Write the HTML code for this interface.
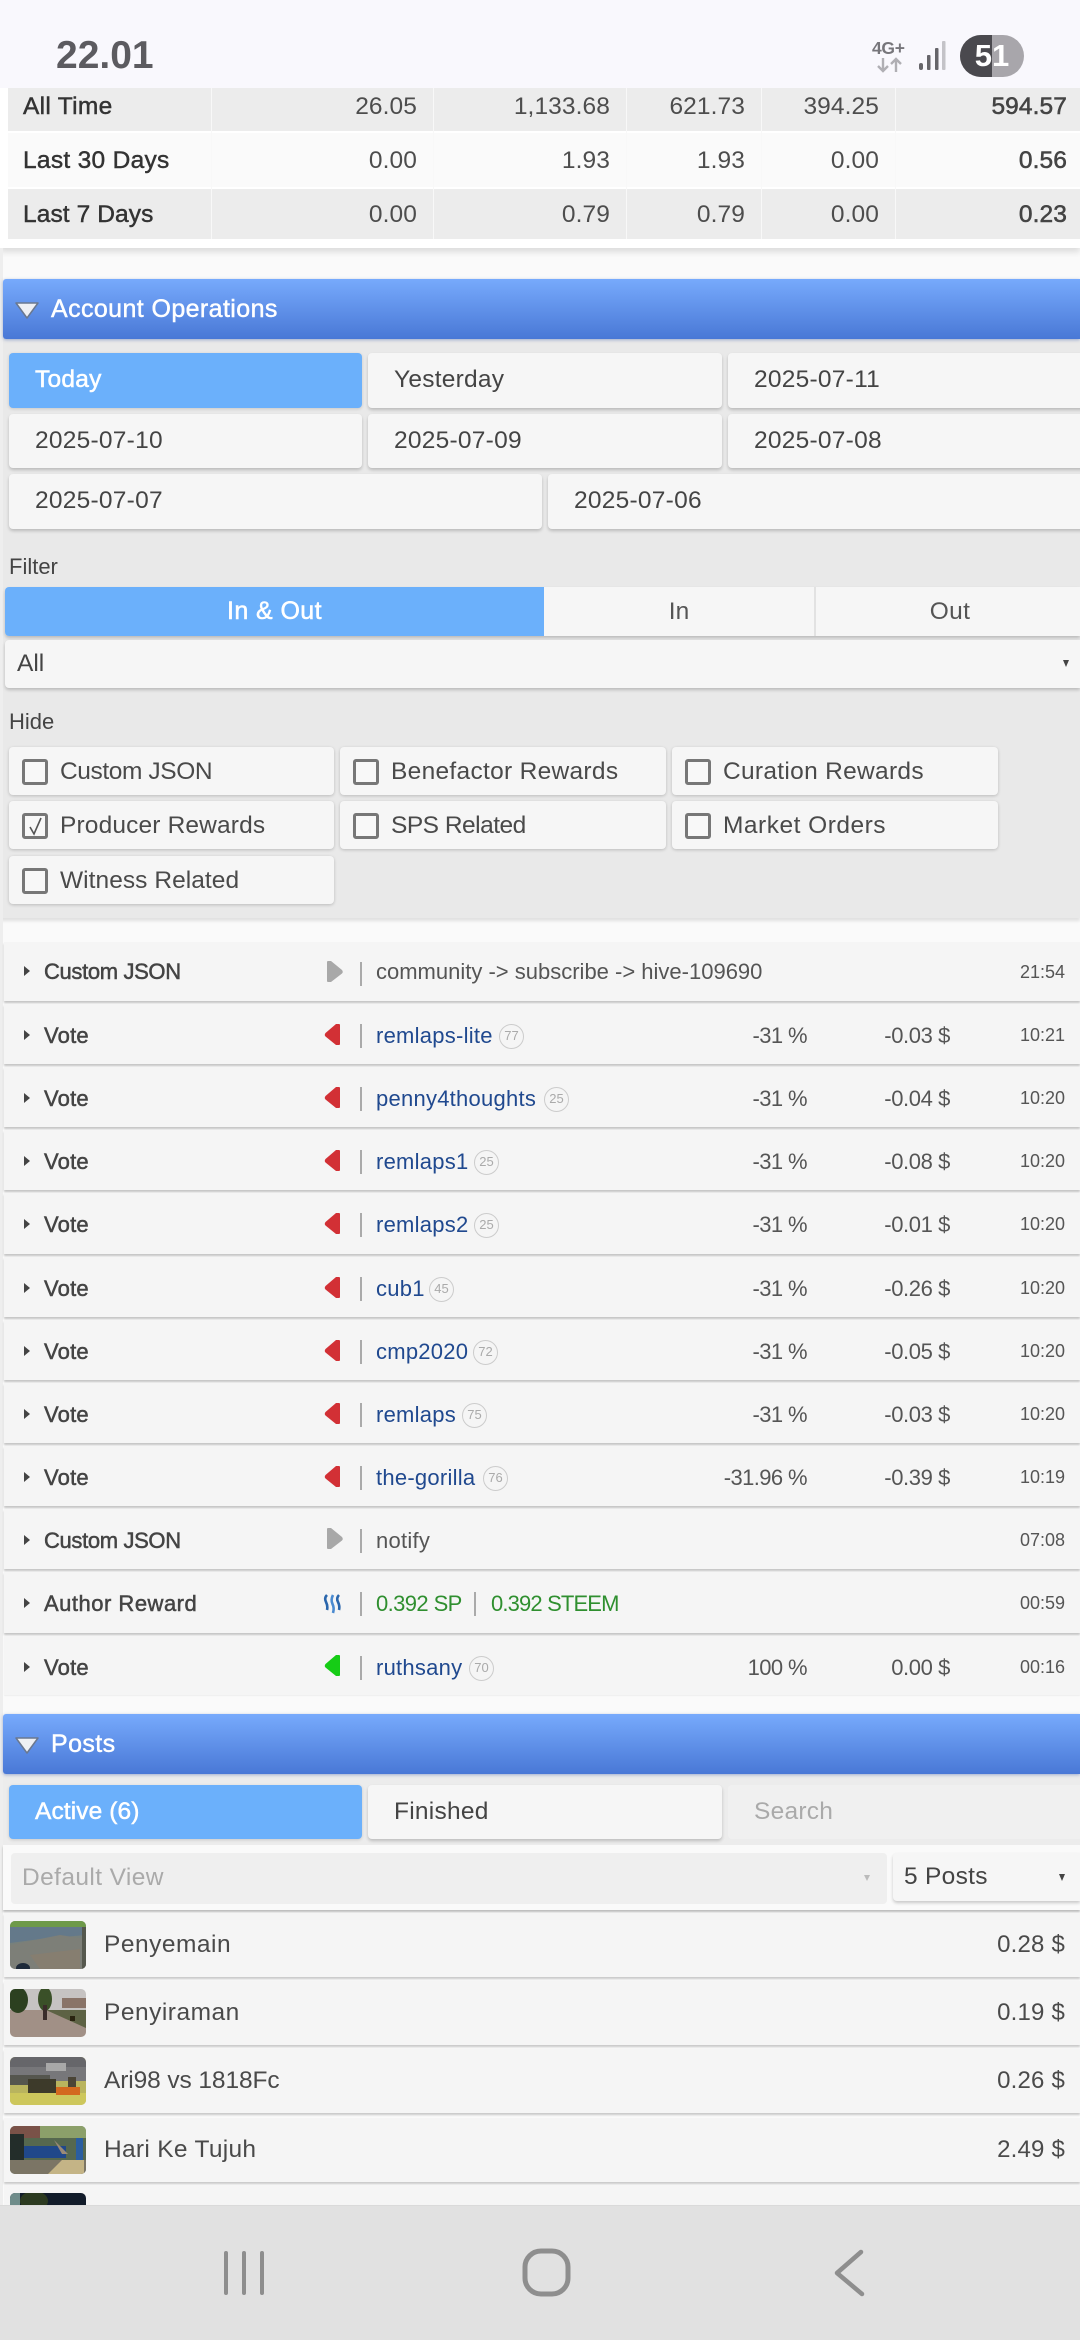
<!DOCTYPE html>
<html><head><meta charset="utf-8">
<style>
html,body{margin:0;padding:0}
body{width:1080px;height:2340px;position:relative;overflow:hidden;background:#fafafa;font-family:"Liberation Sans",sans-serif;color:#444;font-size:24px}
div,svg,span.a{position:absolute}
.t{white-space:nowrap;line-height:30px;height:30px}
.sb{-webkit-text-stroke:.55px currentColor}
.btn{background:#f6f6f6;border-radius:4px;box-shadow:0 2px 3px rgba(0,0,0,.2);line-height:54px;padding-left:26px;box-sizing:border-box;letter-spacing:.25px;color:#444;font-size:24.5px;white-space:nowrap}
.on{background:#6bb0fb;color:#fff;-webkit-text-stroke:.5px #fff;box-shadow:0 1px 3px rgba(0,0,0,.15)}
.hdr{left:3px;width:1077px;height:60px;background:linear-gradient(#77aafc,#4978d6);color:#fff;line-height:60px;font-size:25px;border-radius:3px 0 0 3px;box-shadow:0 1px 3px rgba(80,110,180,.5);-webkit-text-stroke:.45px #fff}
.hdr span{position:absolute;left:48px;letter-spacing:.4px}
.chk{background:#f6f6f6;border-radius:4px;box-shadow:0 1px 3px rgba(0,0,0,.2);height:48px;line-height:50px;padding-left:51px;box-sizing:border-box;font-size:24.5px;letter-spacing:.3px;color:#4a4a4a;white-space:nowrap}
.chk i{position:absolute;left:13px;top:12px;width:20px;height:20px;border:3px solid #777;border-radius:3px;background:#f8f8f8}
.row{left:4px;width:1076px;height:60px;background:#f5f5f5;box-shadow:0 2px 2px rgba(0,0,0,.22)}
.row b{position:absolute;left:40px;top:16.5px;line-height:30px;font-size:22px;font-weight:normal;-webkit-text-stroke:.5px #444;color:#444;white-space:nowrap;letter-spacing:.2px}
.row .ar{left:20px;top:26px;width:0;height:0;border-left:6px solid #444;border-top:5.5px solid transparent;border-bottom:5.5px solid transparent}
.row .sep{left:356px;top:20px;width:2px;height:24px;background:#aaa}
.row .tx{position:absolute;left:372px;top:16.5px;line-height:30px;font-size:22px;white-space:nowrap;letter-spacing:.25px;color:#555}
.row .lk{color:#20498f}
.bd{position:absolute;top:3px;width:23px;height:23px;border:1px solid #ccc;border-radius:50%;font-size:13px;line-height:21px;text-align:center;color:#aaa;font-weight:normal;letter-spacing:0}
.pc{position:absolute;right:273px;top:16.5px;line-height:30px;font-size:22px;color:#555;white-space:nowrap;letter-spacing:-.6px}
.dl{position:absolute;right:130px;top:16.5px;line-height:30px;font-size:22px;color:#555;white-space:nowrap;letter-spacing:-.4px}
.tm{position:absolute;right:15px;top:16px;line-height:30px;font-size:18px;color:#555;white-space:nowrap}
.cell{top:0;font-size:24.5px;line-height:30px;text-align:right;white-space:nowrap;letter-spacing:.1px;color:#4d4d4d}
.post{left:4px;width:1076px;height:64px;background:#f5f5f5;box-shadow:0 2px 2px rgba(0,0,0,.2)}
.post .ti{position:absolute;left:100px;top:17px;line-height:30px;font-size:24.5px;color:#4a4a4a;white-space:nowrap;letter-spacing:.5px}
.post .pr{position:absolute;right:15px;top:17px;line-height:30px;font-size:24px;color:#4a4a4a;white-space:nowrap;letter-spacing:.2px}
.th{left:6px;top:8px;width:76px;height:48px;border-radius:5px;overflow:hidden}
.lab{font-size:24.5px;left:23px;-webkit-text-stroke:.45px #333;color:#333;letter-spacing:.3px}
</style></head><body>

<!-- table top -->
<div style="left:0;top:88px;width:1080px;height:160px;background:#fff;box-shadow:0 4px 6px rgba(0,0,0,.12)"></div>
<div style="left:8px;top:88px;width:1072px;height:43px;background:#ececec"></div>
<div style="left:8px;top:133px;width:1072px;height:54px;background:#fafafa"></div>
<div style="left:8px;top:189px;width:1072px;height:50px;background:#ececec"></div>
<div style="left:211px;top:88px;width:1px;height:151px;background:#f8f8f8"></div>
<div style="left:433px;top:88px;width:1px;height:151px;background:#f8f8f8"></div>
<div style="left:626px;top:88px;width:1px;height:151px;background:#f8f8f8"></div>
<div style="left:761px;top:88px;width:1px;height:151px;background:#f8f8f8"></div>
<div style="left:895px;top:88px;width:1px;height:151px;background:#f8f8f8"></div>

<div style="left:0;top:92px;width:1080px;height:30px">
<div class="t lab">All Time</div>
<div class="cell" style="right:663px">26.05</div><div class="cell" style="right:470px">1,133.68</div><div class="cell" style="right:335px">621.73</div><div class="cell" style="right:201px">394.25</div><div class="cell sb" style="right:13px;color:#444">594.57</div></div>
<div style="left:0;top:146px;width:1080px;height:30px">
<div class="t lab">Last 30 Days</div>
<div class="cell" style="right:663px">0.00</div><div class="cell" style="right:470px">1.93</div><div class="cell" style="right:335px">1.93</div><div class="cell" style="right:201px">0.00</div><div class="cell sb" style="right:13px;color:#444">0.56</div></div>
<div style="left:0;top:200px;width:1080px;height:30px">
<div class="t lab" style="letter-spacing:.1px">Last 7 Days</div>
<div class="cell" style="right:663px">0.00</div><div class="cell" style="right:470px">0.79</div><div class="cell" style="right:335px">0.79</div><div class="cell" style="right:201px">0.00</div><div class="cell sb" style="right:13px;color:#444">0.23</div></div>

<!-- status bar -->
<div style="left:0;top:0;width:1080px;height:88px;background:#f9f8fd"></div>
<div class="t" style="left:56px;top:34px;font-size:39px;line-height:44px;height:44px;font-weight:bold;color:#5c5b60">22.01</div>
<div class="t" style="left:872px;top:36px;font-size:17.500px;line-height:24px;height:24px;font-weight:bold;color:#77767b;letter-spacing:-.3px">4G+</div>
<svg style="left:876px;top:57px" width="28" height="16" viewBox="0 0 28 16" fill="none" stroke="#b0afb4" stroke-width="2.4"><path d="M7 1v13M2 9l5 5 5-5"/><path d="M20 15V2M15 7l5-5 5 5"/></svg>
<svg style="left:918px;top:40px" width="28" height="32" viewBox="0 0 28 32"><rect x="1" y="23" width="4" height="7" rx="2" fill="#66656a"/><rect x="9" y="15" width="3.500" height="15" rx="1" fill="#66656a"/><rect x="17" y="8" width="3.500" height="22" rx="1" fill="#66656a"/><rect x="24" y="1" width="3.500" height="29" rx="1" fill="#c4c3c8"/></svg>
<div style="left:960px;top:35px;width:64px;height:42px;border-radius:21px;overflow:hidden;background:#a8a6ab"><div style="left:0;top:0;width:32px;height:42px;background:#4a494e"></div>
<div class="t" style="left:0;width:64px;top:3px;height:36px;line-height:36px;text-align:center;color:#fff;font-weight:bold;font-size:31px">51</div></div>

<!-- account ops -->
<div style="left:0;top:336px;width:1080px;height:582px;background:#e9e9e9;box-shadow:0 3px 3px rgba(0,0,0,.1)"></div>
<div style="left:0;top:248px;width:3px;height:1960px;background:#eee"></div>
<div class="hdr" style="top:279px"><span>Account Operations</span>
<svg style="left:10px;top:21px" width="28" height="20" viewBox="0 0 28 20"><path d="M3 3h22L14 18z" fill="#eef0f4" stroke="#6a7890" stroke-width="1.5" stroke-linejoin="round"/></svg></div>

<div class="btn on" style="left:9px;top:353px;width:353px;height:55px">Today</div>
<div class="btn" style="left:368px;top:353px;width:354px;height:55px">Yesterday</div>
<div class="btn" style="left:728px;top:353px;width:360px;height:55px">2025-07-11</div>
<div class="btn" style="left:9px;top:414px;width:353px;height:54px">2025-07-10</div>
<div class="btn" style="left:368px;top:414px;width:354px;height:54px">2025-07-09</div>
<div class="btn" style="left:728px;top:414px;width:360px;height:54px">2025-07-08</div>
<div class="btn" style="left:9px;top:474px;width:533px;height:55px">2025-07-07</div>
<div class="btn" style="left:548px;top:474px;width:540px;height:55px">2025-07-06</div>

<div class="t" style="left:9px;top:552px;font-size:22px;color:#444">Filter</div>
<div style="left:5px;top:587px;width:1075px;height:49px;background:#f6f6f6;box-shadow:0 2px 3px rgba(0,0,0,.2);border-radius:4px 0 0 4px"></div>
<div style="left:5px;top:587px;width:539px;height:49px;background:#6bb0fb;border-radius:4px 0 0 4px;color:#fff;-webkit-text-stroke:.5px #fff;text-align:center;line-height:49px;font-size:25px;letter-spacing:.4px">In &amp; Out</div>
<div style="left:814px;top:587px;width:2px;height:49px;background:#e2e2e2"></div>
<div style="left:544px;top:587px;width:270px;height:49px;text-align:center;line-height:49px;font-size:24.5px;color:#555">In</div>
<div style="left:818px;top:587px;width:264px;height:49px;text-align:center;line-height:49px;font-size:24.5px;color:#555;letter-spacing:.3px">Out</div>
<div style="left:5px;top:640px;width:1075px;height:48px;background:#f6f6f6;box-shadow:0 2px 3px rgba(0,0,0,.2);border-radius:4px 0 0 4px;line-height:48px;padding-left:12px;box-sizing:border-box;font-size:24.5px;color:#444">All</div>
<div style="left:1063px;top:660px;width:0;height:0;border-top:7px solid #444;border-left:3px solid transparent;border-right:3px solid transparent"></div>

<div class="t" style="left:9px;top:707px;font-size:22px;color:#444">Hide</div>
<div class="chk" style="left:9px;top:747px;width:325px;letter-spacing:-.4px"><i></i>Custom JSON</div>
<div class="chk" style="left:340px;top:747px;width:326px;letter-spacing:.3px"><i></i>Benefactor Rewards</div>
<div class="chk" style="left:672px;top:747px;width:326px"><i></i>Curation Rewards</div>
<div class="chk" style="left:9px;top:801px;width:325px;letter-spacing:.15px"><i></i>Producer Rewards
<svg style="left:13px;top:12px" width="26" height="26" viewBox="0 0 26 26" fill="none" stroke="#555" stroke-width="1.6"><path d="M8 14l4 7 7-16"/></svg></div>
<div class="chk" style="left:340px;top:801px;width:326px;letter-spacing:-.5px"><i></i>SPS Related</div>
<div class="chk" style="left:672px;top:801px;width:326px;letter-spacing:.5px"><i></i>Market Orders</div>
<div class="chk" style="left:9px;top:856px;width:325px;letter-spacing:.05px"><i></i>Witness Related</div>

<!-- operations -->
<div class="row" style="top:942px;height:59px"><span class="a ar" style="top:24px"></span><b style="top:15px;letter-spacing:-.35px">Custom JSON</b>
<svg style="left:322px;top:19px" width="18" height="22" viewBox="0 0 18 22"><path d="M2 0h3l11 9q1.500 2 0 3.500L5 21H2a1 1 0 0 1-1-1V1a1 1 0 0 1 1-1z" fill="#a8a8a8"/></svg>
<span class="a sep"></span><span class="tx" style="top:15px;letter-spacing:0">community -&gt; subscribe -&gt; hive-109690</span><span class="tm" style="top:14.500px">21:54</span></div>

<div class="row" style="top:1004px"><span class="a ar"></span><b>Vote</b>
<svg style="left:320px;top:20px" width="17" height="22" viewBox="0 0 17 22"><path d="M15 0h-3L1.500 9q-1.500 2 0 3.500L12 21h3a1 1 0 0 0 1-1V1a1 1 0 0 0-1-1z" fill="#d23035"/></svg>
<span class="a sep"></span><span class="tx lk">remlaps-lite<span class="bd" style="left:123px">77</span></span><span class="pc">-31 %</span><span class="dl">-0.03 $</span><span class="tm">10:21</span></div>

<div class="row" style="top:1067px"><span class="a ar"></span><b>Vote</b>
<svg style="left:320px;top:20px" width="17" height="22" viewBox="0 0 17 22"><path d="M15 0h-3L1.500 9q-1.500 2 0 3.500L12 21h3a1 1 0 0 0 1-1V1a1 1 0 0 0-1-1z" fill="#d23035"/></svg>
<span class="a sep"></span><span class="tx lk">penny4thoughts<span class="bd" style="left:168px">25</span></span><span class="pc">-31 %</span><span class="dl">-0.04 $</span><span class="tm">10:20</span></div>

<div class="row" style="top:1130px"><span class="a ar"></span><b>Vote</b>
<svg style="left:320px;top:20px" width="17" height="22" viewBox="0 0 17 22"><path d="M15 0h-3L1.500 9q-1.500 2 0 3.500L12 21h3a1 1 0 0 0 1-1V1a1 1 0 0 0-1-1z" fill="#d23035"/></svg>
<span class="a sep"></span><span class="tx lk">remlaps1<span class="bd" style="left:98px">25</span></span><span class="pc">-31 %</span><span class="dl">-0.08 $</span><span class="tm">10:20</span></div>

<div class="row" style="top:1193px;height:61px"><span class="a ar"></span><b>Vote</b>
<svg style="left:320px;top:20px" width="17" height="22" viewBox="0 0 17 22"><path d="M15 0h-3L1.500 9q-1.500 2 0 3.500L12 21h3a1 1 0 0 0 1-1V1a1 1 0 0 0-1-1z" fill="#d23035"/></svg>
<span class="a sep"></span><span class="tx lk">remlaps2<span class="bd" style="left:98px">25</span></span><span class="pc">-31 %</span><span class="dl">-0.01 $</span><span class="tm">10:20</span></div>

<div class="row" style="top:1257px"><span class="a ar"></span><b>Vote</b>
<svg style="left:320px;top:20px" width="17" height="22" viewBox="0 0 17 22"><path d="M15 0h-3L1.500 9q-1.500 2 0 3.500L12 21h3a1 1 0 0 0 1-1V1a1 1 0 0 0-1-1z" fill="#d23035"/></svg>
<span class="a sep"></span><span class="tx lk">cub1<span class="bd" style="left:53px">45</span></span><span class="pc">-31 %</span><span class="dl">-0.26 $</span><span class="tm">10:20</span></div>

<div class="row" style="top:1320px"><span class="a ar"></span><b>Vote</b>
<svg style="left:320px;top:20px" width="17" height="22" viewBox="0 0 17 22"><path d="M15 0h-3L1.500 9q-1.500 2 0 3.500L12 21h3a1 1 0 0 0 1-1V1a1 1 0 0 0-1-1z" fill="#d23035"/></svg>
<span class="a sep"></span><span class="tx lk">cmp2020<span class="bd" style="left:97px">72</span></span><span class="pc">-31 %</span><span class="dl">-0.05 $</span><span class="tm">10:20</span></div>

<div class="row" style="top:1383px"><span class="a ar"></span><b>Vote</b>
<svg style="left:320px;top:20px" width="17" height="22" viewBox="0 0 17 22"><path d="M15 0h-3L1.500 9q-1.500 2 0 3.500L12 21h3a1 1 0 0 0 1-1V1a1 1 0 0 0-1-1z" fill="#d23035"/></svg>
<span class="a sep"></span><span class="tx lk">remlaps<span class="bd" style="left:86px">75</span></span><span class="pc">-31 %</span><span class="dl">-0.03 $</span><span class="tm">10:20</span></div>

<div class="row" style="top:1446px"><span class="a ar"></span><b>Vote</b>
<svg style="left:320px;top:20px" width="17" height="22" viewBox="0 0 17 22"><path d="M15 0h-3L1.500 9q-1.500 2 0 3.500L12 21h3a1 1 0 0 0 1-1V1a1 1 0 0 0-1-1z" fill="#d23035"/></svg>
<span class="a sep"></span><span class="tx lk">the-gorilla<span class="bd" style="left:107px">76</span></span><span class="pc">-31.96 %</span><span class="dl">-0.39 $</span><span class="tm">10:19</span></div>

<div class="row" style="top:1509px"><span class="a ar"></span><b style="letter-spacing:-.35px">Custom JSON</b>
<svg style="left:322px;top:19px" width="18" height="22" viewBox="0 0 18 22"><path d="M2 0h3l11 9q1.500 2 0 3.500L5 21H2a1 1 0 0 1-1-1V1a1 1 0 0 1 1-1z" fill="#a8a8a8"/></svg>
<span class="a sep"></span><span class="tx">notify</span><span class="tm">07:08</span></div>

<div class="row" style="top:1572px;height:61px"><span class="a ar"></span><b style="letter-spacing:.5px">Author Reward</b>
<svg style="left:319px;top:21px" width="21" height="22" viewBox="0 0 21 22" fill="none" stroke="#2a66ac" stroke-width="2.600"><path d="M4 2Q1 5 3 9T4 17"/><path d="M10 2q-2.500 5-.5 9t.5 9" stroke="#4a8ad0"/><path d="M16 2q-3 3-1 7t1 8"/></svg>
<span class="a sep"></span><span class="tx" style="color:#2f8f2f;font-size:22px;letter-spacing:-.6px">0.392 SP</span><span class="a" style="left:470px;top:20px;width:2px;height:24px;background:#aaa"></span><span class="tx" style="left:487px;color:#2f8f2f;font-size:22px;letter-spacing:-.85px">0.392 STEEM</span><span class="tm">00:59</span></div>

<div class="row" style="top:1636px;height:59px;box-shadow:0 1px 1px rgba(0,0,0,.05)"><span class="a ar"></span><b>Vote</b>
<svg style="left:320px;top:19px" width="17" height="22" viewBox="0 0 17 22"><path d="M15 0h-3L1.500 9q-1.500 2 0 3.500L12 21h3a1 1 0 0 0 1-1V1a1 1 0 0 0-1-1z" fill="#16cc16"/></svg>
<span class="a sep"></span><span class="tx lk">ruthsany<span class="bd" style="left:93px">70</span></span><span class="pc">100 %</span><span class="dl">0.00 $</span><span class="tm">00:16</span></div>

<!-- posts -->
<div style="left:3px;top:1770px;width:1077px;height:75px;background:#ececec"></div>
<div class="hdr" style="top:1714px"><span>Posts</span>
<svg style="left:10px;top:21px" width="28" height="20" viewBox="0 0 28 20"><path d="M3 3h22L14 18z" fill="#eef0f4" stroke="#6a7890" stroke-width="1.5" stroke-linejoin="round"/></svg></div>
<div class="btn on" style="left:9px;top:1785px;width:353px;height:54px;letter-spacing:.1px">Active (6)</div>
<div class="btn" style="left:368px;top:1785px;width:354px;height:54px">Finished</div>
<div class="btn" style="left:728px;top:1785px;width:360px;height:54px;background:#f0f0f0;color:#aaa;box-shadow:none">Search</div>
<div style="left:3px;top:1845px;width:1077px;height:65px;background:#fafafa;box-shadow:0 2px 2px rgba(0,0,0,.25)"></div>
<div style="left:11px;top:1853px;width:876px;height:51px;background:#efefef;border-radius:4px;line-height:50px;padding-left:11px;box-sizing:border-box;color:#aaa;font-size:24.5px;letter-spacing:.4px">Default View</div>
<div style="left:864px;top:1875px;width:0;height:0;border-top:6px solid #bbb;border-left:3px solid transparent;border-right:3px solid transparent"></div>
<div style="left:893px;top:1853px;width:187px;height:48px;background:#f6f6f6;border-radius:4px 0 0 4px;box-shadow:0 2px 3px rgba(0,0,0,.2);line-height:48px;padding-left:11px;box-sizing:border-box;color:#444;font-size:24.5px;letter-spacing:.3px">5 Posts</div>
<div style="left:1059px;top:1874px;width:0;height:0;border-top:7px solid #444;border-left:3px solid transparent;border-right:3px solid transparent"></div>

<div class="post" style="top:1913px"><div class="th"><svg style="left:0;top:0" width="76" height="48"><rect width="76" height="48" fill="#77807c"/><rect width="76" height="6" fill="#6e9a4a"/><path d="M0 6h76v8L30 18 0 22z" fill="#64798a"/><path d="M0 24L50 14l26 4v30H0z" fill="#7d7f78"/><path d="M20 34l50-6v20H30z" fill="#867e70"/><ellipse cx="13" cy="47" rx="7" ry="5" fill="#1e2a3a"/><rect x="72" y="6" width="4" height="42" fill="#55584e"/></svg></div><span class="ti">Penyemain</span><span class="pr">0.28 $</span></div>

<div class="post" style="top:1981px"><div class="th"><svg style="left:0;top:0" width="76" height="48"><rect width="76" height="24" fill="#c6c3c2"/><rect y="21" width="76" height="27" fill="#a19086"/><ellipse cx="8" cy="11" rx="10" ry="13" fill="#2c4020"/><ellipse cx="35" cy="10" rx="7" ry="12" fill="#3a5028"/><rect x="52" y="9" width="24" height="10" fill="#8a7468"/><path d="M36 21h40v18z" fill="#5d6244"/><rect x="33" y="16" width="4" height="15" fill="#3a2c2a"/><rect x="60" y="27" width="5" height="5" fill="#2a2410"/></svg></div><span class="ti">Penyiraman</span><span class="pr">0.19 $</span></div>

<div class="post" style="top:2049px"><div class="th"><svg style="left:0;top:0" width="76" height="48"><rect width="76" height="48" fill="#b9b45e"/><rect y="0" width="76" height="13" fill="#66666a"/><rect y="10" width="76" height="14" fill="#77777a"/><rect x="36" y="6" width="20" height="8" fill="#a8a8a8"/><rect y="36" width="76" height="12" fill="#cdc75c"/><rect x="0" y="18" width="40" height="10" fill="#55564e"/><rect x="18" y="22" width="28" height="14" fill="#3d3a2a"/><rect x="46" y="30" width="24" height="8" fill="#d3691f"/><rect x="58" y="20" width="8" height="10" fill="#4a4436"/></svg></div><span class="ti" style="letter-spacing:-.1px">Ari98 vs 1818Fc</span><span class="pr">0.26 $</span></div>

<div class="post" style="top:2118px"><div class="th"><svg style="left:0;top:0" width="76" height="48"><rect width="76" height="48" fill="#56684f"/><rect y="0" width="30" height="12" fill="#7a5248"/><rect x="30" y="0" width="46" height="12" fill="#8ca06a"/><rect x="6" y="20" width="50" height="12" fill="#20488a"/><rect x="0" y="8" width="14" height="26" fill="#232d2a"/><path d="M0 34h76v14H0z" fill="#7b7565"/><path d="M38 48l14-14h22v14z" fill="#c4b486"/><rect x="66" y="12" width="7" height="22" fill="#2a5ea0"/><path d="M44 14l14 14h-6z" fill="#9a8a78"/></svg></div><span class="ti" style="letter-spacing:.3px">Hari Ke Tujuh</span><span class="pr">2.49 $</span></div>

<div class="post" style="top:2185px;height:24px;box-shadow:none"><div class="th" style="height:30px"><svg style="left:0;top:0" width="76" height="30"><rect width="76" height="30" fill="#121c2a"/><rect x="0" y="0" width="10" height="12" fill="#6f8c8a"/><ellipse cx="24" cy="8" rx="14" ry="10" fill="#2c3a20"/></svg></div></div>

<!-- nav -->
<div style="left:0;top:2205px;width:1080px;height:135px;background:#e1e1e1;border-top:1px solid #dadada;box-sizing:border-box"></div>
<svg style="left:0;top:2205px" width="1080" height="135" viewBox="0 0 1080 135" fill="none" stroke="#8e8e8e" stroke-linecap="round">
<path d="M226 48v40M244 48v40M262 48v40" stroke-width="4"/>
<rect x="525" y="46" width="43" height="43" rx="16" stroke-width="5"/>
<path d="M861 47 L837 68 L862 89" stroke-width="4.500" stroke-linejoin="round"/>
</svg>
</body></html>
